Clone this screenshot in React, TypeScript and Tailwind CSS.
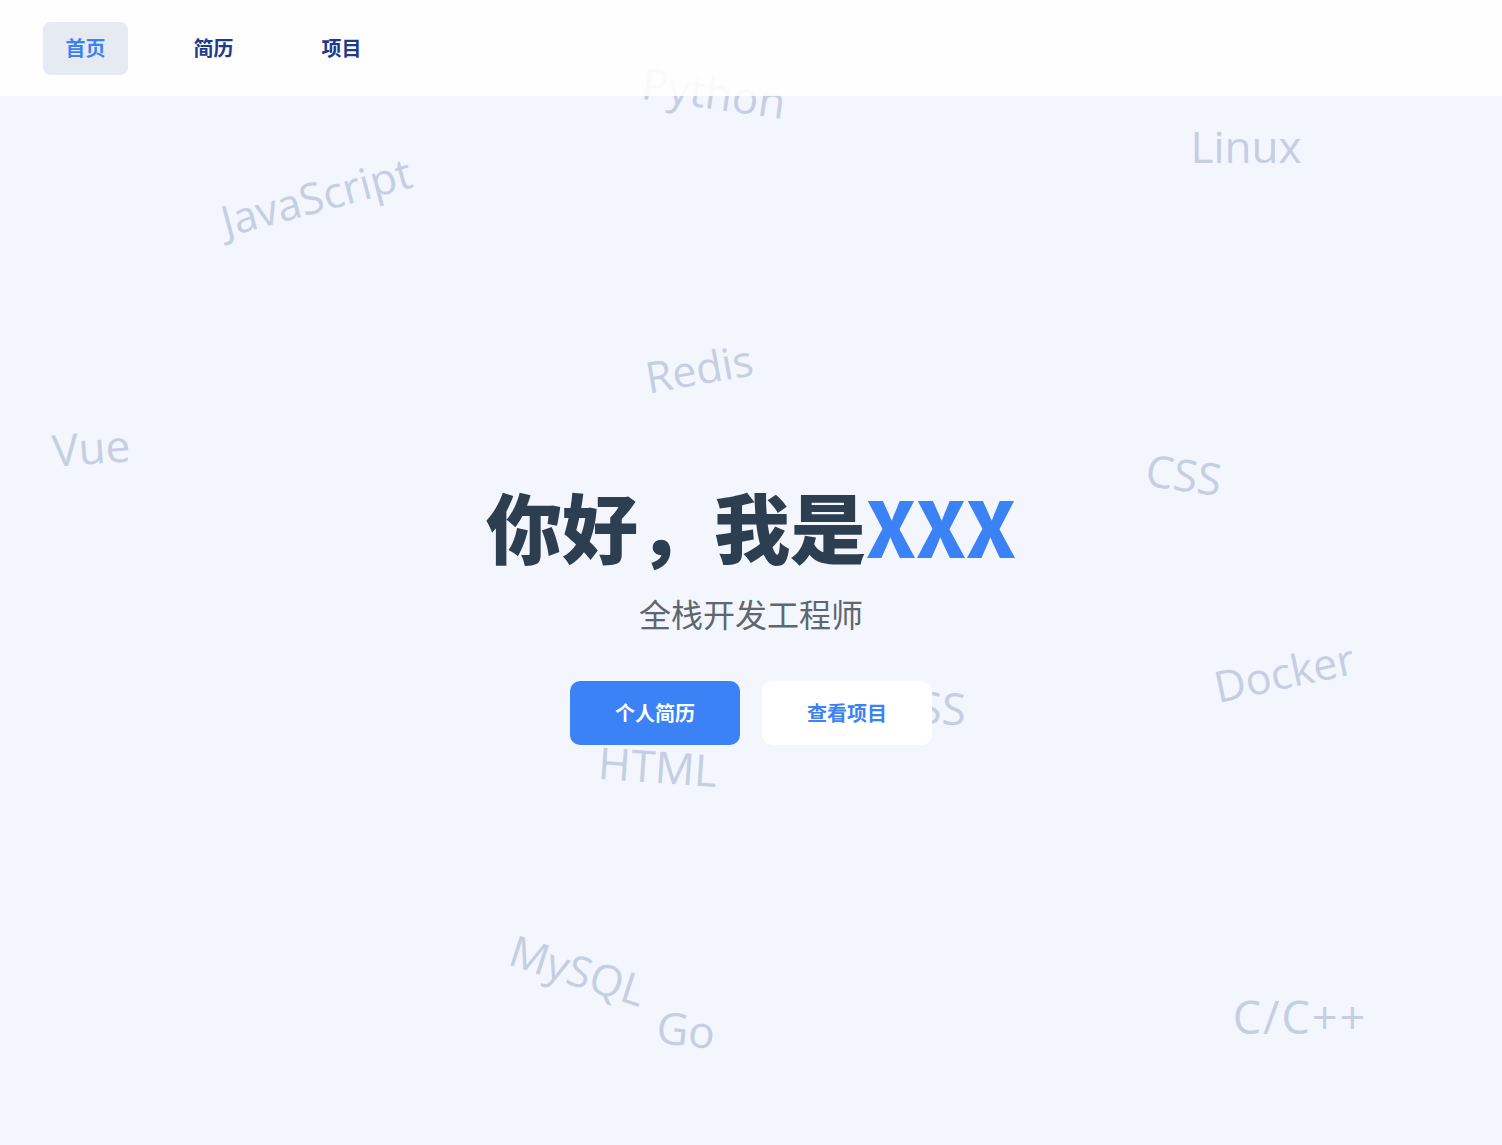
import React from "react";

type Tag = { text: string; cls: string };

const tags: Tag[] = [
  { text: "Python", cls: "left-[714px] top-[92px] rotate-[8deg] text-[44px]" },
  { text: "JavaScript", cls: "left-[316px] top-[196px] -rotate-[15deg] text-[43px]" },
  { text: "Linux", cls: "left-[1246px] top-[146px] rotate-0 text-[44px]" },
  { text: "Redis", cls: "left-[699px] top-[368px] -rotate-[10deg] text-[43px]" },
  { text: "Vue", cls: "left-[91px] top-[447px] -rotate-[4deg] text-[44px]" },
  { text: "CSS", cls: "left-[1184px] top-[474px] rotate-[8deg] text-[44px]" },
  { text: "Docker", cls: "left-[1284px] top-[672px] -rotate-[12deg] text-[43px]" },
  { text: "SCSS", cls: "left-[916px] top-[706px] rotate-[3deg] text-[44px]" },
  { text: "HTML", cls: "left-[658px] top-[766px] rotate-[4deg] text-[44px]" },
  { text: "MySQL", cls: "left-[578px] top-[970px] rotate-[18deg] text-[43px]" },
  { text: "Go", cls: "left-[686px] top-[1029px] rotate-[6deg] text-[44px]" },
  { text: "C/C++", cls: "left-[1300px] top-[1016px] rotate-0 text-[45px] tracking-[2px]" },
];

export default function App() {
  return (
    <div
      className="relative min-h-[1145px] w-full overflow-hidden bg-[#f3f6fd] flex flex-col"
      style={{ fontFamily: '"Noto Sans CJK SC", "Noto Sans", sans-serif' }}
    >
      {/* floating tech words */}
      <div className="pointer-events-none absolute inset-0 z-0">
        {tags.map((t) => (
          <span
            key={t.text}
            className={`absolute -translate-x-1/2 -translate-y-1/2 whitespace-nowrap leading-none text-[#c6cee3] ${t.cls}`}
            style={{ fontFamily: '"Open Sans", "Noto Sans", sans-serif' }}
          >
            {t.text}
          </span>
        ))}
      </div>

      {/* header */}
      <header className="relative z-10 h-[96px] bg-white/90 flex items-center pl-[43px] gap-[43px]">
        <a className="h-[53px] w-[85px] rounded-lg bg-[#e6eaf3] flex items-center justify-center text-[20px] font-bold text-[#3b82f6]">
          首页
        </a>
        <a className="h-[53px] w-[85px] rounded-lg flex items-center justify-center text-[20px] font-bold text-[#1e3a8a]">
          简历
        </a>
        <a className="h-[53px] w-[85px] rounded-lg flex items-center justify-center text-[20px] font-bold text-[#1e3a8a]">
          项目
        </a>
      </header>

      {/* hero */}
      <main className="relative z-10 flex-1 flex flex-col items-center justify-center pb-[10px]">
        <h1 className="text-[76px] leading-[76px] font-black text-[#2c3e50]">
          你好，我是<span className="text-[#3b82f6]">XXX</span>
        </h1>
        <p className="mt-[28px] text-[32px] leading-[44px] text-[#60666f]">全栈开发工程师</p>
        <div className="mt-[46px] flex gap-[22px]">
          <button className="h-[64px] w-[170px] rounded-[10px] bg-[#3b82f6] text-white text-[20px] font-bold">
            个人简历
          </button>
          <button className="h-[64px] w-[170px] rounded-[10px] bg-white text-[#3b82f6] text-[20px] font-bold">
            查看项目
          </button>
        </div>
      </main>
    </div>
  );
}
